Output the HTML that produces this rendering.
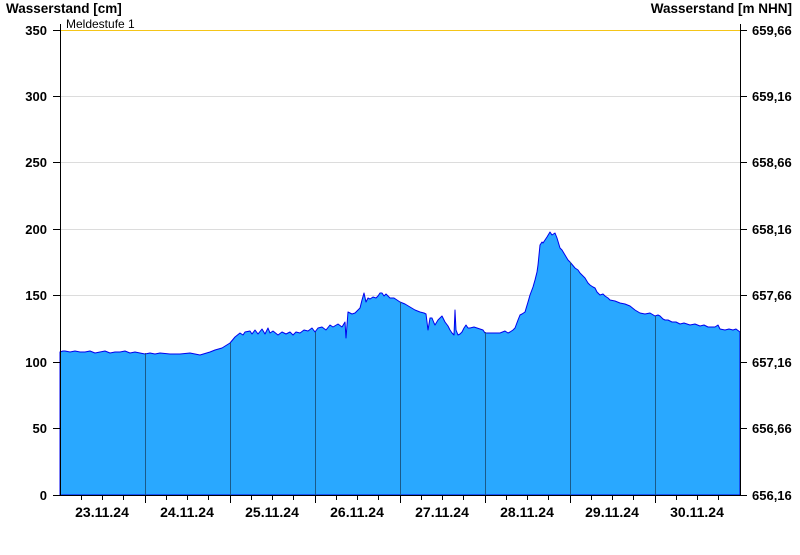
<!DOCTYPE html>
<html><head><meta charset="utf-8"><style>
body{margin:0;background:#fff;width:800px;height:550px;overflow:hidden}
svg text{font-family:"Liberation Sans",Arial,sans-serif;font-weight:bold;font-size:13px;fill:#000}
</style></head><body>
<svg width="800" height="550" viewBox="0 0 800 550" xmlns="http://www.w3.org/2000/svg">
<g stroke="#dcdcdc" stroke-width="1">
<line x1="60" x2="740" y1="96.5" y2="96.5"/><line x1="60" x2="740" y1="162.5" y2="162.5"/>
<line x1="60" x2="740" y1="229.5" y2="229.5"/><line x1="60" x2="740" y1="295.5" y2="295.5"/>
<line x1="60" x2="740" y1="362.5" y2="362.5"/><line x1="60" x2="740" y1="428.5" y2="428.5"/>
</g>
<line x1="60" x2="740" y1="30.5" y2="30.5" stroke="#f5c518" stroke-width="1"/>
<text x="66" y="28" style="font-weight:normal;font-size:12px">Meldestufe 1</text>
<polygon fill="#29a8ff" stroke="#0000ee" stroke-width="1" stroke-linejoin="round" points="60,495 60,352 63,351 65,351 70,352 75,351 80,352 85,352 90,351 95,353 100,352 105,351 110,353 115,352 120,352 125,351 130,353 135,352 145,354 150,353 155,354 160,353 170,354 180,354 190,353 200,355 210,352 215,350 222,348 230,343 235,337 240,333 243,335 245,332 250,331 252,334 255,330 258,334 262,329 265,334 268,328 270,333 273,331 278,335 282,332 286,334 290,332 293,335 296,332 300,333 304,330 308,331 312,328 315,332 318,328 322,327 326,330 330,325 333,327 338,324 342,327 345,322 346,338 348,312 352,314 355,313 358,310 360,308 362,300 364,293 366,302 368,298 370,299 373,297 376,298 378,296 380,293 382,293 384,296 386,294 390,298 394,298 400,302 405,304 410,307 415,310 420,312 424,313 426,314 428,330 430,318 432,318 434,323 435,325 438,320 440,318 442,316 445,322 448,326 450,330 452,333 454,335 455,310 456,330 458,335 460,334 462,332 464,328 466,325 468,328 470,328 474,327 480,329 483,330 485,333 492,333 500,333 505,331 508,333 510,332 513,330 515,328 518,320 520,315 522,314 525,312 528,302 530,295 533,287 535,280 537,272 538,265 539,255 540,245 542,242 543,243 545,240 547,237 550,232 552,235 555,233 557,238 560,248 562,250 565,255 568,260 570,262 575,268 578,270 580,273 583,276 585,278 588,283 590,285 593,287 595,288 597,292 600,295 603,294 605,296 608,298 610,300 615,301 620,303 625,304 630,306 635,310 640,313 645,314 650,313 655,316 658,315 660,316 663,319 665,320 668,320 672,322 676,322 680,324 684,323 690,325 695,324 700,326 704,325 708,327 712,327 715,327 718,325 720,329 725,330 729,329 733,330 736,329 740,332 740,495"/>
<g stroke="#1a5a8a" stroke-width="1">
<line x1="145.5" x2="145.5" y1="353" y2="495"/><line x1="230.5" x2="230.5" y1="343" y2="495"/>
<line x1="315.5" x2="315.5" y1="332" y2="495"/><line x1="400.5" x2="400.5" y1="302" y2="495"/>
<line x1="485.5" x2="485.5" y1="332" y2="495"/><line x1="570.5" x2="570.5" y1="262" y2="495"/>
<line x1="655.5" x2="655.5" y1="316" y2="495"/>
</g>
<g stroke="#000" stroke-width="1">
<line x1="60.5" x2="60.5" y1="24" y2="495"/><line x1="740.5" x2="740.5" y1="24" y2="495"/>
<line x1="60" x2="741" y1="495.5" y2="495.5"/>
<line x1="53" x2="60" y1="30.5" y2="30.5"/><line x1="53" x2="60" y1="96.5" y2="96.5"/><line x1="53" x2="60" y1="162.5" y2="162.5"/><line x1="53" x2="60" y1="229.5" y2="229.5"/><line x1="53" x2="60" y1="295.5" y2="295.5"/><line x1="53" x2="60" y1="362.5" y2="362.5"/><line x1="53" x2="60" y1="428.5" y2="428.5"/><line x1="53" x2="60" y1="495.5" y2="495.5"/>
<line x1="740" x2="747" y1="30.5" y2="30.5"/><line x1="740" x2="747" y1="96.5" y2="96.5"/><line x1="740" x2="747" y1="162.5" y2="162.5"/><line x1="740" x2="747" y1="229.5" y2="229.5"/><line x1="740" x2="747" y1="295.5" y2="295.5"/><line x1="740" x2="747" y1="362.5" y2="362.5"/><line x1="740" x2="747" y1="428.5" y2="428.5"/><line x1="740" x2="747" y1="495.5" y2="495.5"/>
</g>
<text x="6" y="13" style="font-size:13.5px">Wasserstand [cm]</text>
<text x="792" y="13" text-anchor="end" style="font-size:13.5px">Wasserstand [m NHN]</text>
<g text-anchor="end">
<text x="47" y="35">350</text><text x="47" y="101">300</text><text x="47" y="167">250</text><text x="47" y="234">200</text><text x="47" y="300">150</text><text x="47" y="367">100</text><text x="47" y="433">50</text><text x="47" y="500">0</text>
</g>
<g>
<text x="752" y="35">659,66</text><text x="752" y="101">659,16</text><text x="752" y="167">658,66</text><text x="752" y="234">658,16</text><text x="752" y="300">657,66</text><text x="752" y="367">657,16</text><text x="752" y="433">656,66</text><text x="752" y="500">656,16</text>
</g>
<g text-anchor="middle" style="font-size:14px">
<text x="102" y="517" style="font-size:14px">23.11.24</text><text x="187" y="517" style="font-size:14px">24.11.24</text><text x="272" y="517" style="font-size:14px">25.11.24</text><text x="357" y="517" style="font-size:14px">26.11.24</text><text x="442" y="517" style="font-size:14px">27.11.24</text><text x="527" y="517" style="font-size:14px">28.11.24</text><text x="612" y="517" style="font-size:14px">29.11.24</text><text x="697" y="517" style="font-size:14px">30.11.24</text>
</g>
<g stroke="#000" stroke-width="1">
<line x1="81.5" x2="81.5" y1="495" y2="500"/><line x1="102.5" x2="102.5" y1="495" y2="500"/><line x1="123.5" x2="123.5" y1="495" y2="500"/><line x1="145.5" x2="145.5" y1="495" y2="503"/>
<line x1="166.5" x2="166.5" y1="495" y2="500"/><line x1="187.5" x2="187.5" y1="495" y2="500"/><line x1="208.5" x2="208.5" y1="495" y2="500"/><line x1="230.5" x2="230.5" y1="495" y2="503"/>
<line x1="251.5" x2="251.5" y1="495" y2="500"/><line x1="272.5" x2="272.5" y1="495" y2="500"/><line x1="293.5" x2="293.5" y1="495" y2="500"/><line x1="315.5" x2="315.5" y1="495" y2="503"/>
<line x1="336.5" x2="336.5" y1="495" y2="500"/><line x1="357.5" x2="357.5" y1="495" y2="500"/><line x1="378.5" x2="378.5" y1="495" y2="500"/><line x1="400.5" x2="400.5" y1="495" y2="503"/>
<line x1="421.5" x2="421.5" y1="495" y2="500"/><line x1="442.5" x2="442.5" y1="495" y2="500"/><line x1="463.5" x2="463.5" y1="495" y2="500"/><line x1="485.5" x2="485.5" y1="495" y2="503"/>
<line x1="506.5" x2="506.5" y1="495" y2="500"/><line x1="527.5" x2="527.5" y1="495" y2="500"/><line x1="548.5" x2="548.5" y1="495" y2="500"/><line x1="570.5" x2="570.5" y1="495" y2="503"/>
<line x1="591.5" x2="591.5" y1="495" y2="500"/><line x1="612.5" x2="612.5" y1="495" y2="500"/><line x1="633.5" x2="633.5" y1="495" y2="500"/><line x1="655.5" x2="655.5" y1="495" y2="503"/>
<line x1="676.5" x2="676.5" y1="495" y2="500"/><line x1="697.5" x2="697.5" y1="495" y2="500"/><line x1="718.5" x2="718.5" y1="495" y2="500"/>
</g>
</svg>
</body></html>
